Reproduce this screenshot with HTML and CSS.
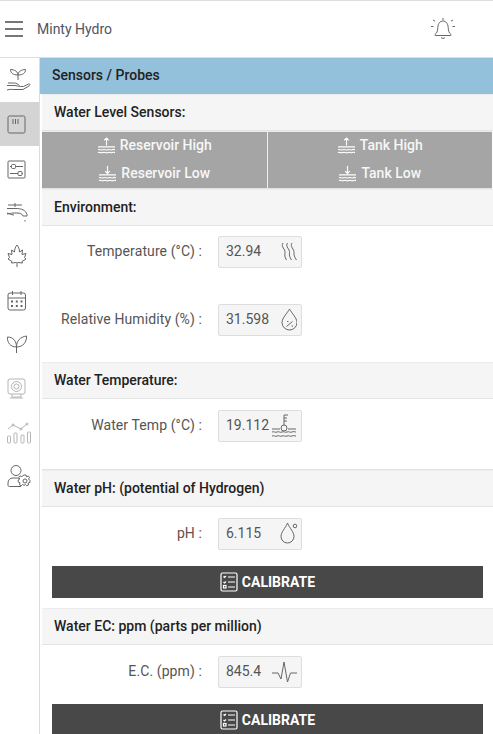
FILE: index.html
```html
<!DOCTYPE html>
<html lang="en">
<head>
    <meta charset="UTF-8">
    <meta name="viewport" content="width=device-width, initial-scale=1.0">
    <title>Minty Hydro</title>
    <link rel="stylesheet" href="styles.css">
</head>
<body>
    <div class="topbar">
        <div class="burger"><span></span><span></span><span></span></div>
        <div class="brand">Minty Hydro</div>
        <svg class="bell" viewBox="0 0 26 24" width="26" height="24">
            <path d="M5 17.500c2-1.500 2.600-3.500 2.800-7C8 6.500 10 4 13 4s5 2.500 5.200 6.500c.2 3.500.8 5.500 2.800 7 .5.500.2 1-.4 1H5.400c-.6 0-.9-.5-.4-1z"/>
            <path d="M11 20.500c1 1.200 3 1.200 4 0M13 1v2M3 3l2 1.200M23 3l-2 1.200M1 9.500h2.500M25 9.500h-2.500"/>
        </svg>
    </div>

    <div class="layout">
        <nav class="sidebar">
            <a class="nav-item">
                <svg viewBox="0 0 24 24"><path d="M11 12V7M11 7C11 4 8 1.500 3.500 1.500 3.500 5 6 7 11 7zM11 7c0-3 3-5.500 7.500-5.500C18.500 5 16 7 11 7z"/><path d="M0 17.500h8c2 0 3.500 1 5.500 1h3l5-2.500c1.500-.5 2 1 .5 2L16 21.500H7c-2 0-4-.5-7 .5M1 15h6c2 0 4 1 5.500 2.500"/></svg>
            </a>
            <a class="nav-item active">
                <svg viewBox="0 0 24 24"><rect x="1" y="4" width="17" height="17" rx="1.500"/><path d="M6 7v5M8.500 7v5M11 7v5"/></svg>
            </a>
            <a class="nav-item">
                <svg viewBox="0 0 24 24"><rect x="1" y="5" width="17" height="17" rx="1"/><path d="M3 10.500h1.500M8.500 10.500h7.500M3 17.500h8M15 17.500h1"/><rect x="4.500" y="8.500" width="4" height="4" rx="1"/><rect x="11" y="15.500" width="4" height="4" rx="1"/></svg>
            </a>
            <a class="nav-item">
                <svg viewBox="0 0 24 24"><path d="M1 5h14M8 3v4M0 8.500h9c5 0 10 1.500 11 6v1.500h-4c-.5-2-3-3-6-3H6c-2 0-3 1-6 1M0 13c2 0 4 2 7 2"/><path d="M18 20v1.500"/></svg>
            </a>
            <a class="nav-item">
                <svg viewBox="0 0 24 24"><path d="M10 1c1.500 2 2.500 4 2.500 7l3-2-.5 4.500 4-1-1.500 4 1.500 1.500-4 2.500.5 1.500-5-.5-.5.5-.5-.5-5 .5.5-1.500-4-2.500 1.500-1.500-1.500-4 4 1-.5-4.500 3 2c0-3 1-5 2.500-7zM10 19v4"/></svg>
            </a>
            <a class="nav-item">
                <svg viewBox="0 0 24 24"><rect x="1" y="5" width="17.500" height="17" rx="2"/><path d="M1 10h17.500M5.500 3v4M14 3v4"/><path class="dots" d="M4 13.500h2M8.800 13.500h2M13.500 13.500h2M4 18h2M8.800 18h2M13.500 18h2"/></svg>
            </a>
            <a class="nav-item">
                <svg viewBox="0 0 24 24"><path d="M9.500 21v-6M9.500 15C3 15 0 10 .5 5 6 5 9.500 9 9.500 15zM9.500 15c0-6 3.500-10 10-11C20 10 16 15 9.500 15z"/></svg>
            </a>
            <a class="nav-item faded">
                <svg viewBox="0 0 24 24"><rect x="1" y="3" width="17" height="15" rx="2"/><circle cx="9.500" cy="10.500" r="5"/><circle cx="9.500" cy="10.500" r="2.500"/><path d="M5 18v3h9v-3M3 22h13"/></svg>
            </a>
            <a class="nav-item faded">
                <svg viewBox="0 0 24 24"><rect x=".5" y="16" width="3" height="7" rx="1"/><rect x="7" y="13" width="3" height="10" rx="1"/><rect x="14" y="15" width="3" height="8" rx="1"/><rect x="20.500" y="12" width="3" height="11" rx="1"/><path d="M1 9l5-4 8 4 6-5"/><circle cx="6" cy="5" r="1"/><circle cx="14" cy="9" r="1"/><circle cx="20" cy="4" r="1"/></svg>
            </a>
            <a class="nav-item">
                <svg viewBox="0 0 24 24"><circle cx="9" cy="6.500" r="5"/><path d="M13 15c-1-.5-2-1-4-1H6c-3 0-5 2-5 5v2c0 1 .5 1.500 1.500 1.500H14"/><circle cx="18" cy="17" r="2"/><path d="M17 11h2l.5 1.800 1.800-.8 1.200 1.500-1 1.500 1.500 1.500v2l-1.800.5.300 2-1.700.8-1.300-1.300-1.500.8-1.500-.8-1.300 1.300-1.700-1 .5-2-1.800-.8v-2l1.500-1-1-1.800 1.300-1.400 1.800.8z"/></svg>
            </a>
        </nav>

        <main class="content">
            <div class="page-title">Sensors / Probes</div>

            <div class="section-head">Water Level Sensors:</div>
            <div class="levels">
                <div class="level-col">
                    <div class="level">
                        <svg viewBox="0 0 20 18"><path d="M10 1v8M7.500 3.500L10 1l2.500 2.500M1 10.500h18M1 13.500c2-1 3 1 5 0s3 1 5 0 3 1 5 0 2 0 3 0M1 16.500c2-1 3 1 5 0s3 1 5 0 3 1 5 0 2 0 3 0"/></svg>
                        Reservoir High
                    </div>
                    <div class="level">
                        <svg viewBox="0 0 20 18"><path d="M10 1v8M7.500 6.500L10 9l2.500-2.500M1 10.500h18M1 13.500c2-1 3 1 5 0s3 1 5 0 3 1 5 0 2 0 3 0M1 16.500c2-1 3 1 5 0s3 1 5 0 3 1 5 0 2 0 3 0"/></svg>
                        Reservoir Low
                    </div>
                </div>
                <div class="level-col">
                    <div class="level">
                        <svg viewBox="0 0 20 18"><path d="M10 1v8M7.500 3.500L10 1l2.500 2.500M1 10.500h18M1 13.500c2-1 3 1 5 0s3 1 5 0 3 1 5 0 2 0 3 0M1 16.500c2-1 3 1 5 0s3 1 5 0 3 1 5 0 2 0 3 0"/></svg>
                        Tank High
                    </div>
                    <div class="level">
                        <svg viewBox="0 0 20 18"><path d="M10 1v8M7.500 6.500L10 9l2.500-2.500M1 10.500h18M1 13.500c2-1 3 1 5 0s3 1 5 0 3 1 5 0 2 0 3 0M1 16.500c2-1 3 1 5 0s3 1 5 0 3 1 5 0 2 0 3 0"/></svg>
                        Tank Low
                    </div>
                </div>
            </div>

            <div class="section-head">Environment:</div>
            <div class="reading first">
                <label>Temperature (°C) :</label>
                <div class="value">
                    <span>32.94</span>
                    <svg viewBox="0 0 24 24"><path d="M10 3C7.500 7 12.500 9 12 12.500c-.3 2.500-.5 4.500 1.500 7.500M14.500 3C12 7 17 9 16.500 12.500c-.3 2.500 0 4.500 2 7.500M19 3C16.500 7 21.500 9 21 12.500c-.3 2.500.5 4.500 2.500 7.500"/></svg>
                </div>
            </div>
            <div class="reading second">
                <label>Relative Humidity (%) :</label>
                <div class="value">
                    <span>31.598</span>
                    <svg viewBox="0 0 24 24"><path d="M16.500 1c-2 4-7.500 9-7.500 13.500a7.500 7.500 0 0 0 15 0C24 10 18.500 5 16.500 1z"/><path d="M13.500 18.500l6-5M14 13.500h1.500M18.500 18h1.500"/></svg>
                </div>
            </div>

            <div class="section-head">Water Temperature:</div>
            <div class="reading last">
                <label>Water Temp (°C) :</label>
                <div class="value">
                    <span>19.112</span>
                    <svg class="wide" viewBox="0 0 26 24"><path d="M13 1v10M13 1h4M13 4h3M13 7h3M1 15h8M17 15h8"/><circle cx="13" cy="14" r="3"/><path d="M1 18c2-1 3 1 5 0s3 1 5 0 3 1 5 0 3 1 5 0 2 0 4 0M1 22c2-1 3 1 5 0s3 1 5 0 3 1 5 0 3 1 5 0 2 0 4 0"/></svg>
                </div>
            </div>

            <div class="section-head ruled">Water pH: (potential of Hydrogen)</div>
            <div class="reading with-btn">
                <label class="ph">pH :</label>
                <div class="value">
                    <span>6.115</span>
                    <svg viewBox="0 0 24 24"><path d="M14.500 1c-2 5-6.500 9-6.500 13.500a6.500 6.500 0 0 0 13 0C21 10 16.500 6 14.500 1z"/><circle cx="22" cy="4" r="1.800"/></svg>
                </div>
            </div>
            <button class="calibrate" type="button">
                <svg viewBox="0 0 18 20"><rect x="1" y="1" width="16" height="18" rx="1.500"/><path d="M3.500 4.500l1 1 1.500-1.500M8 5h7M3.500 10l1 1 1.500-1.500M8 10h7M8 15h7"/><rect x="3.500" y="13.500" width="2.500" height="2.500"/></svg>
                CALIBRATE
            </button>

            <div class="section-head">Water EC: ppm (parts per million)</div>
            <div class="reading with-btn">
                <label>E.C. (ppm) :</label>
                <div class="value">
                    <span>845.4</span>
                    <svg class="wide" viewBox="0 0 26 24"><path d="M1 13h6l3 6 3-17 3.500 20 3-9h6.500"/></svg>
                </div>
            </div>
            <button class="calibrate" type="button">
                <svg viewBox="0 0 18 20"><rect x="1" y="1" width="16" height="18" rx="1.500"/><path d="M3.500 4.500l1 1 1.500-1.500M8 5h7M3.500 10l1 1 1.500-1.500M8 10h7M8 15h7"/><rect x="3.500" y="13.500" width="2.500" height="2.500"/></svg>
                CALIBRATE
            </button>
        </main>
    </div>
</body>
</html>
```

FILE: styles.css
```css
html, body {
    height: 100%;
}
body {
    margin: 0;
    font-family: Roboto, "Liberation Sans", sans-serif;
    font-size: 14px;
    color: #555;
    background-color: #fff;
    overflow: hidden;
}
svg {
    fill: none;
    stroke: #666;
    stroke-width: 1;
}

.topbar {
    display: flex;
    align-items: center;
    height: 56px;
    border-top: 1px solid #dcdde1;
    border-bottom: 1px solid #dcdde1;
    padding-left: 5px;
}
.burger {
    display: flex;
    flex-direction: column;
    gap: 5px;
    width: 18px;
}
.burger span {
    height: 2px;
    background-color: #777;
}
.brand {
    margin-left: 14px;
    font-size: 14px;
    color: #4f5563;
}
.bell {
    margin-left: auto;
    margin-right: 37px;
}

.layout {
    display: flex;
}
.sidebar {
    flex: none;
    width: 39px;
    height: 676px;
    border-right: 1px solid #dcdcdc;
}
.nav-item {
    display: flex;
    align-items: center;
    height: 44px;
    padding-left: 7px;
}
.nav-item svg {
    width: 24px;
    height: 24px;
}
.nav-item.active {
    background-color: #d4d4d4;
}
.nav-item.faded svg {
    stroke: #b5b5b5;
}
.nav-item .dots {
    stroke-width: 2;
}

.content {
    flex: 1;
    min-width: 0;
}
.page-title {
    height: 36px;
    line-height: 34px;
    padding-left: 12px;
    font-weight: 500;
    color: #222;
    background-color: #93c1db;
}
.section-head {
    height: 37px;
    line-height: 36px;
    box-sizing: border-box;
    margin-left: 2px;
    padding-left: 12px;
    font-weight: 500;
    color: #222;
    background-color: #f5f5f5;
    border-bottom: 1px solid #e4e4e4;
    box-shadow: inset 0 1px 0 #ececec;
}
.section-head.ruled {
    border-top: 1px solid #e4e4e4;
    height: 38px;
}

.levels {
    display: flex;
    height: 58px;
    margin-left: 2px;
    margin-right: 1px;
    background-color: #a5a5a5;
    border-top: 1px solid #ececec;
    border-bottom: 1px solid #e4e4e4;
    box-sizing: border-box;
}
.level-col {
    flex: 1;
}
.level-col + .level-col {
    border-left: 1px solid #eee;
}
.level {
    display: flex;
    align-items: center;
    justify-content: center;
    gap: 4px;
    box-sizing: border-box;
    height: 28px;
    padding-bottom: 2px;
    font-weight: 500;
    color: #f7f7f7;
}
.level svg {
    width: 19px;
    height: 17px;
    stroke: #fff;
    stroke-width: 1.200;
}

.reading {
    display: flex;
    align-items: center;
    margin-left: 2px;
    padding-top: 11px;
    padding-bottom: 11px;
}
.reading.first {
    padding-top: 10px;
    padding-bottom: 2px;
}
.reading.second {
    padding-top: 34px;
    padding-bottom: 26px;
}
.reading.last {
    padding-bottom: 27px;
}
.reading.with-btn {
    padding-bottom: 16px;
}
.reading label {
    width: 160px;
    margin-bottom: 2px;
    text-align: right;
    letter-spacing: .1px;
    color: #555;
}
.reading label.ph {
    color: #6a4c4c;
}
.value {
    display: flex;
    align-items: center;
    justify-content: space-between;
    box-sizing: border-box;
    width: 84px;
    height: 32px;
    margin-left: 16px;
    padding-left: 7px;
    padding-right: 4px;
    background-color: #f5f5f5;
    border: 1px solid #ddd;
    border-radius: 2px;
    color: #555;
}
.value span {
    margin-bottom: 2px;
}
.value svg {
    width: 24px;
    height: 24px;
}
.value svg.wide {
    width: 26px;
}

.calibrate {
    display: flex;
    align-items: center;
    justify-content: center;
    gap: 4px;
    width: 431px;
    height: 32px;
    margin-left: 12px;
    margin-bottom: 10px;
    padding: 0;
    border: none;
    background-color: #484848;
    color: #fff;
    font-family: inherit;
    font-size: 14px;
    font-weight: 700;
}
.calibrate svg {
    width: 18px;
    height: 20px;
    stroke: #fff;
    stroke-width: 1.200;
}
```
